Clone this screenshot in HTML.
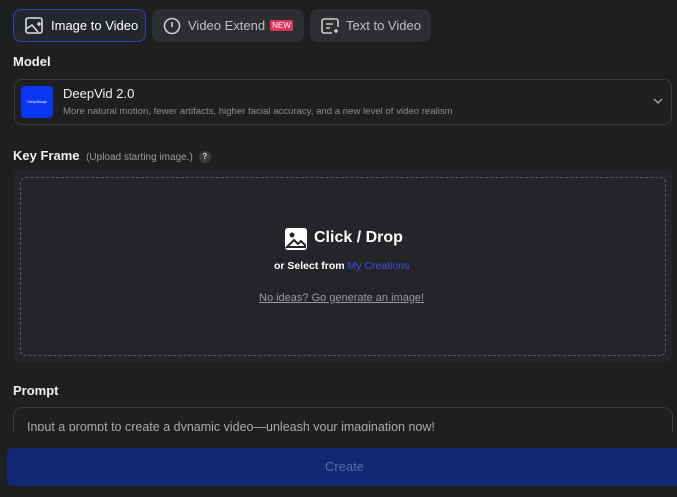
<!DOCTYPE html>
<html><head><style>
body{margin:0;width:677px;height:497px;background:#1e1f21;font-family:"Liberation Sans",sans-serif;color:#e8e8e8;position:relative;overflow:hidden}
.a{position:absolute;white-space:nowrap}
.tab{position:absolute;top:9px;height:33px;border-radius:8px;background:#2d2e31;display:flex;align-items:center;font-size:13px;color:#bfc0c3;box-sizing:border-box;white-space:nowrap}
.lbl{position:absolute;left:13px;font-size:13px;font-weight:bold;color:#f0f0f0}
</style></head><body>
<div class="tab" style="left:13px;width:133px;border:1px solid #3441b0;background:#25272e;color:#fff;padding-left:11px">
<svg width="20" height="18" viewBox="0 0 20 18" fill="none" stroke="#ddd" stroke-width="1.6"><rect x="1" y="1" width="16" height="15" rx="2"/><path d="M1 12 L7 8 L13 15"/><path d="M14 5v4M12 7h4"/></svg><span style="margin-left:6px">Image to Video</span></div>
<div class="tab" style="left:152px;width:152px;padding-left:11px">
<svg width="18" height="18" viewBox="0 0 18 18" fill="none" stroke="#ccc" stroke-width="1.6"><circle cx="9" cy="9" r="7.5"/><path d="M9 5v5"/></svg><span style="margin-left:7px">Video Extend</span><span style="margin-left:5px;background:#e0335a;color:#fff;font-size:8px;padding:1px 2px;border-radius:2px">NEW</span></div>
<div class="tab" style="left:310px;width:121px;padding-left:11px">
<svg width="19" height="18" viewBox="0 0 19 18" fill="none" stroke="#ccc" stroke-width="1.6"><path d="M11 16H3a2 2 0 0 1-2-2V4a2 2 0 0 1 2-2h12a2 2 0 0 1 2 2v6"/><path d="M5 7h7M5 11h4M15 12v4M13 14h4"/></svg><span style="margin-left:6px">Text to Video</span></div>
<div class="lbl" style="top:54px">Model</div>
<div class="a" style="left:14px;top:79px;width:656px;height:44px;border:1px solid #3a3b3e;border-radius:8px"></div>
<div class="a" style="left:21px;top:86px;width:32px;height:32px;background:#0a37f5;border-radius:4px;font-size:4px;color:#fff;text-align:center;line-height:32px">DeepSwap</div>
<div class="a" style="left:63px;top:86px;font-size:13px;color:#f2f2f2">DeepVid 2.0</div>
<div class="a" style="left:63px;top:106px;font-size:9.6px;color:#8c8d90">More natural motion, fewer artifacts, higher facial accuracy, and a new level of video realism</div>
<svg class="a" style="left:653px;top:97px" width="10" height="8" viewBox="0 0 10 8" fill="none" stroke="#aaa" stroke-width="1.3"><path d="M1 2l4 4 4-4"/></svg>
<div class="lbl" style="top:148px">Key Frame <span style="font-weight:normal;font-size:10px;color:#9a9b9e;margin-left:3px">(Upload starting image.)</span><span style="display:inline-block;margin-left:6px;width:12px;height:12px;border-radius:6px;background:#3a3b3e;font-size:8px;text-align:center;line-height:12px;color:#ddd;vertical-align:1px">?</span></div>
<div class="a" style="left:13px;top:170px;width:659px;height:192px;background:#242528;border-radius:6px"></div>
<div class="a" style="left:20px;top:177px;width:644px;height:177px;border:1px dashed #5a5b5e;border-radius:6px"></div>
<svg class="a" style="left:285px;top:228px" width="22" height="22" viewBox="0 0 22 22"><rect x="0" y="0" width="22" height="22" rx="3" fill="#fff"/><circle cx="7" cy="7" r="2.5" fill="#242528"/><path d="M2 19 L9 12 L13 16 L16 13 L20 17 L20 19Z" fill="none" stroke="#242528" stroke-width="2"/></svg>
<div class="a" style="left:314px;top:229px;font-size:16px;font-weight:bold;color:#fff">Click / Drop</div>
<div class="a" style="left:274px;top:260px;font-size:10.5px;font-weight:bold;color:#fff">or Select from <span style="color:#3b4fe8;font-weight:normal">My Creations</span></div>
<div class="a" style="left:259px;top:292px;font-size:11px;color:#9a9b9e;text-decoration:underline">No ideas? Go generate an image!</div>
<div class="lbl" style="top:383px">Prompt</div>
<div class="a" style="left:13px;top:407px;width:658px;height:40px;border:1px solid #3a3b3e;border-radius:10px;overflow:hidden"></div>
<div class="a" style="left:27px;top:420px;height:11px;overflow:hidden;font-size:12.5px;color:#aaa;line-height:15px">Input a prompt to create a dynamic video—unleash your imagination now!</div>
<div class="a" style="left:0;top:432px;width:677px;height:65px;background:#1e1f21"></div>
<div class="a" style="left:7px;top:448px;width:675px;height:38px;background:#132874;border-radius:6px;text-align:center;line-height:38px;font-size:13px;color:#5b6aa0">Create</div>
</body></html>
